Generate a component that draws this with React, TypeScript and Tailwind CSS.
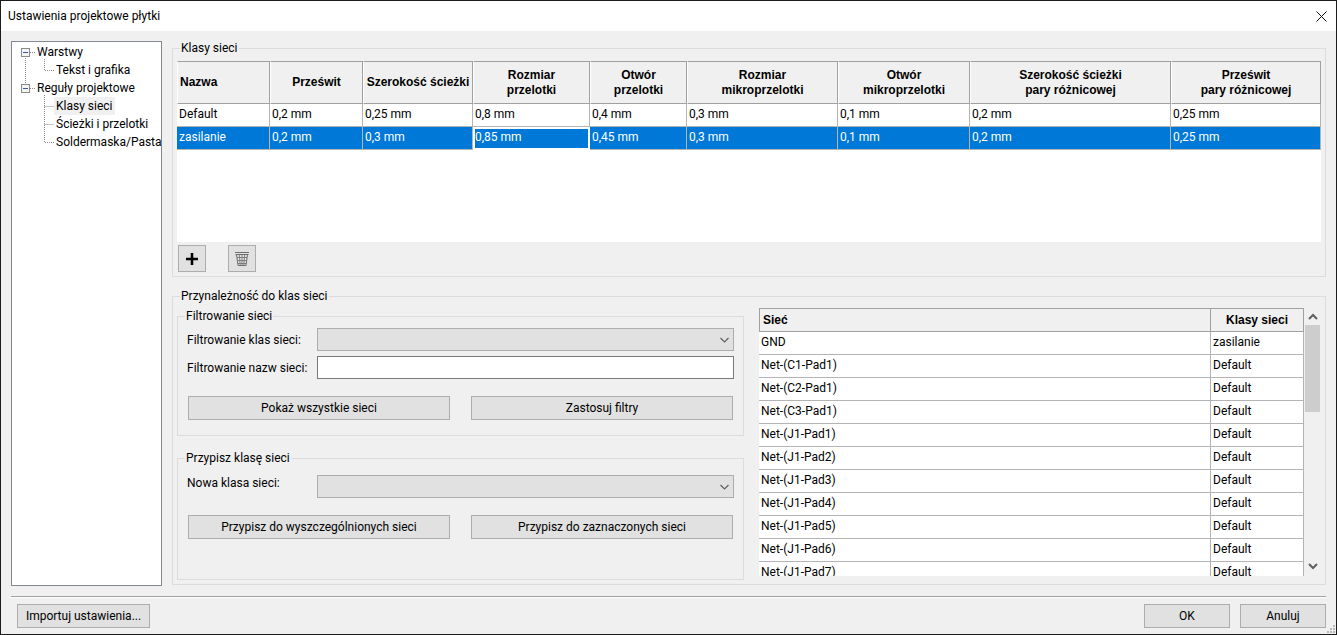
import React from "react";

const sans = "font-['Roboto',sans-serif]";

const headers = [
  { t: "Nazwa", left: true },
  { t: "Prześwit" },
  { t: "Szerokość ścieżki" },
  { t: "Rozmiar\nprzelotki" },
  { t: "Otwór\nprzelotki" },
  { t: "Rozmiar\nmikroprzelotki" },
  { t: "Otwór\nmikroprzelotki" },
  { t: "Szerokość ścieżki\npary różnicowej" },
  { t: "Prześwit\npary różnicowej" },
];
const row1 = ["Default", "0,2 mm", "0,25 mm", "0,8 mm", "0,4 mm", "0,3 mm", "0,1 mm", "0,2 mm", "0,25 mm"];
const row2 = ["zasilanie", "0,2 mm", "0,3 mm", "0,85 mm", "0,45 mm", "0,3 mm", "0,1 mm", "0,2 mm", "0,25 mm"];
const nets = [
  ["GND", "zasilanie"],
  ["Net-(C1-Pad1)", "Default"],
  ["Net-(C2-Pad1)", "Default"],
  ["Net-(C3-Pad1)", "Default"],
  ["Net-(J1-Pad1)", "Default"],
  ["Net-(J1-Pad2)", "Default"],
  ["Net-(J1-Pad3)", "Default"],
  ["Net-(J1-Pad4)", "Default"],
  ["Net-(J1-Pad5)", "Default"],
  ["Net-(J1-Pad6)", "Default"],
  ["Net-(J1-Pad7)", "Default"],
];

function ScrollChevron({ up = false }: { up?: boolean }) {
  return (
    <svg width="10" height="7" viewBox="0 0 10 7" fill="none" stroke="#606060" strokeWidth="2">
      <path d={up ? "M1 6 L5 2 L9 6" : "M1 1 L5 5 L9 1"} />
    </svg>
  );
}

function Combo() {
  return (
    <div className="flex-1 h-[23px] bg-[#e1e1e1] border border-[#adadad] flex items-center justify-end pr-1">
      <svg width="9" height="6" viewBox="0 0 9 6" fill="none" stroke="#606060" strokeWidth="1.2">
        <path d="M0.5 1 L4.5 5 L8.5 1" />
      </svg>
    </div>
  );
}

function Btn({ children, className }: { children: React.ReactNode; className: string }) {
  return (
    <button className={`h-6 bg-[#e1e1e1] border border-[#adadad] text-[#000] text-xs flex items-center justify-center ${className}`}>
      {children}
    </button>
  );
}

function Group({
  title,
  className,
  legendClass,
  children,
}: {
  title: string;
  className: string;
  legendClass: string;
  children: React.ReactNode;
}) {
  return (
    <fieldset className={`border border-[#dcdcdc] min-w-0 ${className}`}>
      <legend className={`px-[1px] h-[15px] leading-[15px] ${legendClass}`}>{title}</legend>
      {children}
    </fieldset>
  );
}

function TreeRow({ label, child, active }: { label: string; child?: boolean; active?: boolean }) {
  return (
    <div className={`h-[18px] flex items-center ${child ? "pl-[42px]" : "pl-[23px]"}`}>
      <span className={`h-[18px] leading-[18px] px-[2px] ${active ? "bg-[#f0f0f0]" : ""}`}>{label}</span>
    </div>
  );
}

function ExpandBox({ y }: { y: number }) {
  return (
    <g>
      <rect x="9.5" y={y + 0.5} width="8" height="8" fill="#f4f4f4" stroke="#8a8a8a" />
      <path d={`M11 ${y + 4.5} H16`} stroke="#3a5a9a" />
    </g>
  );
}

export default function App() {
  return (
    <div className={`relative w-[1337px] h-[635px] overflow-hidden flex flex-col bg-[#f0f0f0] border border-[#1c1c1c] text-xs text-black ${sans}`}>
      <div className="h-[30px] shrink-0 bg-white flex items-center justify-between pl-[7px] pr-[9px]">
        <span>Ustawienia projektowe płytki</span>
        <svg width="11" height="11" viewBox="0 0 11 11" stroke="#111" strokeWidth="1" fill="none">
          <path d="M0.5 0.5 L10.5 10.5 M10.5 0.5 L0.5 10.5" />
        </svg>
      </div>

      <div className="flex pt-[10px] pl-[10px] gap-[10px]">
        {/* tree */}
        <div className="relative w-[151px] h-[545px] shrink-0 bg-white border border-[#828790] pt-[1px]">
          <svg className="absolute left-0 top-0" width="60" height="110" fill="none">
            <g stroke="#8a8a8a" strokeDasharray="1 1">
              <path d="M13.5 14 V44" />
              <path d="M18 10.5 H24 M18 46.5 H24" />
              <path d="M32.5 17 V28.5 H42" />
              <path d="M32.5 53 V100.5 H42 M32.5 64.5 H42 M32.5 82.5 H42" />
            </g>
            <ExpandBox y={6} />
            <ExpandBox y={42} />
          </svg>
          <div className="relative">
            <TreeRow label="Warstwy" />
            <TreeRow label="Tekst i grafika" child />
            <TreeRow label="Reguły projektowe" />
            <TreeRow label="Klasy sieci" child active />
            <TreeRow label="Ścieżki i przelotki" child />
            <TreeRow label="Soldermaska/Pasta" child />
          </div>
        </div>

        {/* right column */}
        <div className="w-[1154px] flex flex-col">
          <Group title="Klasy sieci" legendClass="ml-[3px]" className="h-[236px] pl-1 pr-1 pt-[5px]">
            <div className="h-[181px] bg-white">
              <div className="grid grid-cols-[93px_93px_110px_117px_97px_151px_132px_201px_150px] grid-rows-[43px_23px_23px]">
                {headers.map((h) => (
                  <div
                    key={h.t}
                    className={`bg-[#f0f0f0] border-t border-b border-r border-[#a0a0a0] border-l border-l-white flex items-center font-['Liberation_Sans',sans-serif] font-bold leading-[15px] whitespace-pre-line ${
                      h.left ? "pl-[2px]" : "justify-center text-center"
                    }`}
                  >
                    {h.t}
                  </div>
                ))}
                {row1.map((c, i) => (
                  <div key={i} className="border-b border-r border-[#b4b4b4] pl-[2px] leading-[21px] whitespace-nowrap">
                    {c}
                  </div>
                ))}
                {row2.map((c, i) =>
                  i === 3 ? (
                    <div key={i} className="bg-[#0078d7] text-white border-2 border-white leading-[17px] whitespace-nowrap">
                      {c}
                    </div>
                  ) : (
                    <div key={i} className="bg-[#0078d7] text-white border-b border-r border-[#b4b4b4] pl-[2px] leading-[21px] whitespace-nowrap">
                      {c}
                    </div>
                  )
                )}
              </div>
            </div>
            <div className="flex gap-[22px] pl-[1px] pt-[3px]">
              <button className="w-7 h-[27px] bg-[#e1e1e1] border border-[#adadad] flex items-center justify-center">
                <svg width="14" height="14" viewBox="0 0 14 14" stroke="#000" strokeWidth="2.6" fill="none">
                  <path d="M7 1 V13 M1 7 H13" />
                </svg>
              </button>
              <button className="w-7 h-[27px] bg-[#e1e1e1] border border-[#adadad] flex items-center justify-center">
                <svg width="16" height="16" viewBox="0 0 16 16" fill="none" stroke="#6e6e6e" strokeWidth="1">
                  <path d="M1 1.5 H15 M1.5 3.5 H14.5 M2.5 3.5 L4 14.5 H12 L13.5 3.5" />
                  <path d="M5.3 3.5 L6.2 14.5 M8 3.5 V14.5 M10.7 3.5 L9.8 14.5 M3 6.5 H13 M3.4 9.5 H12.6 M3.8 12.5 H12.2" strokeWidth="0.8" />
                </svg>
              </button>
            </div>
          </Group>

          <Group title="Przynależność do klas sieci" legendClass="ml-[3px]" className="mt-3 h-[296px] pl-1 pr-1">
            <div className="flex gap-[15px]">
              <div className="w-[567px] shrink-0 flex flex-col">
                <Group title="Filtrowanie sieci" legendClass="-ml-[2px]" className="mt-[5px] h-[127px] pt-1 pl-[9px] pr-[9px]">
                  <div className="flex flex-col gap-[5px]">
                    <div className="flex items-center h-[23px]">
                      <span className="w-[130px]">Filtrowanie klas sieci:</span>
                      <Combo />
                    </div>
                    <div className="flex items-center h-[23px]">
                      <span className="w-[130px]">Filtrowanie nazw sieci:</span>
                      <div className="flex-1 h-[23px] bg-white border border-[#7a7a7a]" />
                    </div>
                  </div>
                  <div className="flex gap-[21px] mt-[17px] pl-[1px]">
                    <Btn className="w-[262px]">Pokaż wszystkie sieci</Btn>
                    <Btn className="w-[262px]">Zastosuj filtry</Btn>
                  </div>
                </Group>
                <Group title="Przypisz klasę sieci" legendClass="-ml-[2px]" className="mt-[15px] h-[129px] pt-[9px] pl-[9px] pr-[9px]">
                  <div className="flex h-[23px]">
                    <span className="w-[130px] leading-[16px]">Nowa klasa sieci:</span>
                    <Combo />
                  </div>
                  <div className="flex gap-[21px] mt-[17px] pl-[1px]">
                    <Btn className="w-[262px]">Przypisz do wyszczególnionych sieci</Btn>
                    <Btn className="w-[262px]">Przypisz do zaznaczonych sieci</Btn>
                  </div>
                </Group>
              </div>

              <div className="w-[561px] h-[268px] mt-1 flex overflow-hidden">
                <div className="w-[545px] bg-white shrink-0">
                  <div className="grid grid-cols-[452px_93px] grid-rows-[24px]">
                    <div className="bg-[#f0f0f0] border border-[#a0a0a0] font-['Liberation_Sans',sans-serif] font-bold pl-[3px] leading-[22px]">Sieć</div>
                    <div className="bg-[#f0f0f0] border-t border-b border-r border-[#a0a0a0] font-['Liberation_Sans',sans-serif] font-bold text-center leading-[22px]">Klasy sieci</div>
                  </div>
                  {nets.map(([a, b]) => (
                    <div key={a} className="grid grid-cols-[452px_93px] h-[23px] shrink-0">
                      <div className="border-b border-r border-[#b4b4b4] pl-[2px] leading-[21px]">{a}</div>
                      <div className="border-b border-r border-[#b4b4b4] pl-[2px] leading-[21px]">{b}</div>
                    </div>
                  ))}
                </div>
                <div className="w-4 flex flex-col relative">
                  <div className="h-[17px] flex items-center pl-[4px] shrink-0">
                    <ScrollChevron up />
                  </div>
                  <div className="w-[15px] ml-[1px] h-[87px] bg-[#cdcdcd]" />
                  <div className="absolute bottom-[6px] left-[4px] flex">
                    <ScrollChevron />
                  </div>
                </div>
              </div>
            </div>
          </Group>
        </div>
      </div>

      <div className="mx-[10px] mt-[10px] h-[2px] shrink-0 border-t border-[#a0a0a0] border-b border-b-white" />
      <div className="flex justify-between pl-4 pr-[10px] pt-[6px]">
        <Btn className="w-[133px]">Importuj ustawienia...</Btn>
        <div className="flex gap-[10px]">
          <Btn className="w-[86px]">OK</Btn>
          <Btn className="w-[86px]">Anuluj</Btn>
        </div>
      </div>

      <svg className="absolute right-0 bottom-0" width="9" height="9" fill="#b8b8b8">
        <rect x="6" y="0" width="2" height="2" />
        <rect x="3" y="3" width="2" height="2" />
        <rect x="6" y="3" width="2" height="2" />
        <rect x="0" y="6" width="2" height="2" />
        <rect x="3" y="6" width="2" height="2" />
        <rect x="6" y="6" width="2" height="2" />
      </svg>
    </div>
  );
}
